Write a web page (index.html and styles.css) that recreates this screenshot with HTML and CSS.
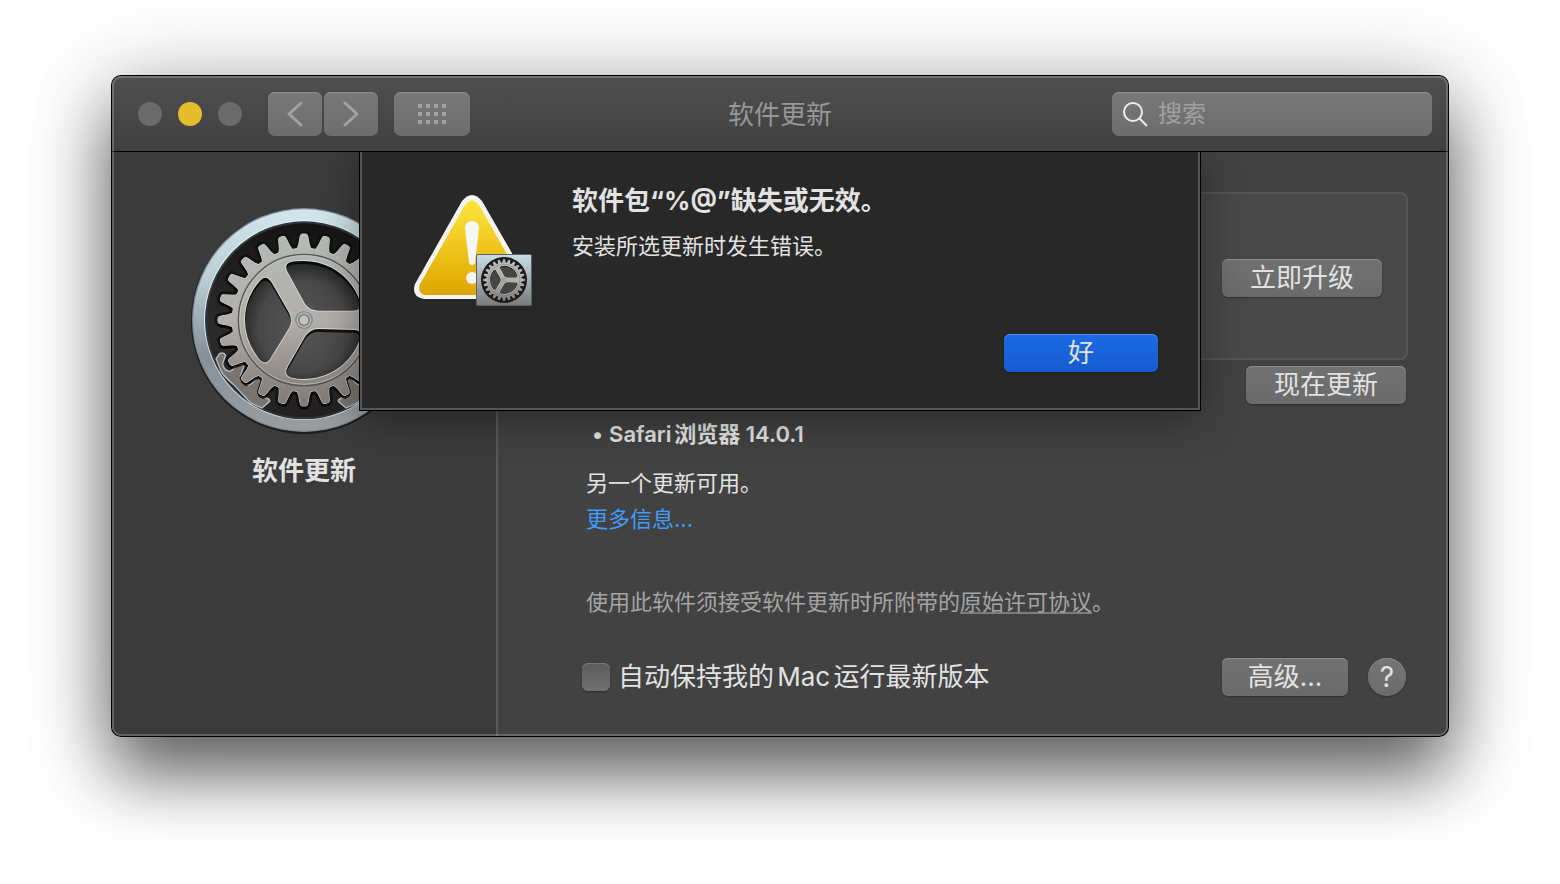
FILE: index.html
```html
<!DOCTYPE html>
<html lang="zh-CN">
<head>
    <meta charset="UTF-8">
    <meta name="viewport" content="width=device-width, initial-scale=1.0">
    <title>软件更新</title>
    <link rel="stylesheet" href="styles.css">
</head>
<body>
    <!-- 齿轮图形，侧栏和警告图标共用 -->
    <svg class="defs" width="0" height="0" aria-hidden="true">
        <defs>
            <linearGradient id="metal" x1="0" y1="0" x2="0" y2="1">
                <stop offset="0" stop-color="#b3bab4"/>
                <stop offset=".5" stop-color="#b3afab"/>
                <stop offset="1" stop-color="#7d7671"/>
            </linearGradient>
            <linearGradient id="ring" x1="0" y1="0" x2="0" y2="1">
                <stop offset="0" stop-color="#d3e6ed"/>
                <stop offset=".3" stop-color="#bccfd7"/>
                <stop offset=".65" stop-color="#86919b"/>
                <stop offset="1" stop-color="#9a9d9f"/>
            </linearGradient>
            <linearGradient id="inside" x1="0" y1="0" x2="0" y2="1">
                <stop offset="0" stop-color="#161413"/>
                <stop offset=".5" stop-color="#2c2b2b"/>
                <stop offset="1" stop-color="#232120"/>
            </linearGradient>
            <radialGradient id="floor" cx=".5" cy=".55" r=".5">
                <stop offset="0" stop-color="#565656"/>
                <stop offset=".75" stop-color="#484848"/>
                <stop offset="1" stop-color="#2c2b2b"/>
            </radialGradient>
            <path id="tooth" d="M-27-205 Q-19-214-16-226 L-11-252 Q-10-258-4-258 H4 Q10-258 11-252 L16-226 Q19-214 27-205Z"/>
            <g id="teeth6">
                <use href="#tooth"/>
                <use href="#tooth" transform="rotate(15)"/>
                <use href="#tooth" transform="rotate(30)"/>
                <use href="#tooth" transform="rotate(45)"/>
                <use href="#tooth" transform="rotate(60)"/>
                <use href="#tooth" transform="rotate(75)"/>
            </g>
            <g id="wheel">
                <circle r="215"/>
                <use href="#teeth6"/>
                <use href="#teeth6" transform="rotate(90)"/>
                <use href="#teeth6" transform="rotate(180)"/>
                <use href="#teeth6" transform="rotate(270)"/>
            </g>
            <path id="hole" d="M44-28 L146-28 Q174-29 169-52 A177 177 0 0 0-22-176 Q-62-175-51-148 L2-50 Q15-28 44-28Z"/>
            <g id="holes">
                <use href="#hole"/>
                <use href="#hole" transform="rotate(120)"/>
                <use href="#hole" transform="rotate(240)"/>
            </g>
            <mask id="edgeMask" maskUnits="userSpaceOnUse" x="-280" y="-280" width="560" height="560">
                <use href="#wheel" fill="#fff" stroke="#fff" stroke-width="3"/>
                <use href="#holes" fill="#000"/>
            </mask>
            <mask id="bodyMask" maskUnits="userSpaceOnUse" x="-280" y="-280" width="560" height="560">
                <use href="#wheel" fill="#fff"/>
                <use href="#holes" fill="#000" stroke="#000" stroke-width="5"/>
            </mask>
            <g id="gear">
                <rect x="-270" y="-270" width="540" height="540" fill="#000" opacity=".75" mask="url(#edgeMask)" transform="translate(0 9)"/>
                <rect x="-270" y="-270" width="540" height="540" fill="#d5dde0" mask="url(#edgeMask)"/>
                <rect x="-270" y="-270" width="540" height="540" fill="url(#metal)" mask="url(#bodyMask)"/>
                <circle r="197" fill="none" stroke="#55555a" stroke-width="4"/>
                <circle r="193" fill="none" stroke="#c3c7c8" stroke-width="2"/>
                <circle r="26" fill="#77797c"/>
                <circle r="23" fill="#b7bcbf"/>
                <circle r="18" fill="#6c6f73"/>
                <circle r="14" fill="#c2c2c1"/>
            </g>
        </defs>
    </svg>

    <div class="window">
        <header class="titlebar">
            <div class="lights">
                <button class="light" aria-label="关闭"></button>
                <button class="light light-min" aria-label="最小化"></button>
                <button class="light" aria-label="缩放"></button>
            </div>
            <div class="nav">
                <button class="tool" aria-label="后退">
                    <svg width="16" height="26" viewBox="0 0 16 26"><path d="M14 2 2 13 14 24"/></svg>
                </button>
                <button class="tool" aria-label="前进">
                    <svg width="16" height="26" viewBox="0 0 16 26"><path d="M2 2 14 13 2 24"/></svg>
                </button>
            </div>
            <button class="tool tool-grid" aria-label="显示全部">
                <svg width="28" height="20" viewBox="0 0 28 20">
                    <path class="dots" d="M0 0h4v4H0zM8 0h4v4H8zM16 0h4v4h-4zM24 0h4v4h-4zM0 8h4v4H0zM8 8h4v4H8zM16 8h4v4h-4zM24 8h4v4h-4zM0 16h4v4H0zM8 16h4v4H8zM16 16h4v4h-4zM24 16h4v4h-4z"/>
                </svg>
            </button>
            <h1>软件更新</h1>
            <label class="search">
                <svg width="26" height="26" viewBox="0 0 26 26"><circle cx="11" cy="11" r="9"/><path d="M17 17 25 25"/></svg>
                <input type="search" placeholder="搜索" aria-label="搜索">
            </label>
        </header>

        <div class="content">
            <aside class="sidebar">
                <svg class="app-icon" viewBox="-342 -342 684 684" aria-hidden="true">
                    <circle cy="3" r="339" fill="#1c1c1c"/>
                    <circle r="336" fill="#7e8d99"/>
                    <circle r="332" fill="url(#ring)"/>
                    <circle r="300" fill="#dcebf3"/>
                    <circle cy="1" r="297" fill="#30363c"/>
                    <circle cy="1" r="291" fill="url(#inside)"/>
                    <use href="#wheel" fill="#141212" stroke="#141212" stroke-width="20"/>
                    <g fill="#7b746e" stroke="#b4bfc8" stroke-width="4">
                        <path id="mesh" d="M-264 116 L-252 100 Q-240 96-235 106 L-244 130 Q-242 150-224 154 Q-212 151-204 136 Q-192 126-180 139 L-191 168 Q-188 188-166 195 Q-152 190-140 169 Q-130 166-125 178 L-137 208 Q-136 230-116 234 Q-102 236-103 244 L-126 264 L-160 249 Q-185 222-211 194 Q-240 170-248 155Z"/>
                        <use href="#mesh" transform="scale(-1 1)"/>
                    </g>
                    <use href="#wheel" fill="#141212" stroke="#141212" stroke-width="10"/>
                    <circle r="182" fill="url(#floor)"/>
                    <use href="#gear"/>
                </svg>
                <h2>软件更新</h2>
            </aside>

            <main class="main">
                <section class="upgrade">
                    <button class="btn">立即升级</button>
                </section>
                <div class="update-now">
                    <button class="btn">现在更新</button>
                </div>
                <div class="info">
                    <ul class="updates">
                        <li>Safari浏览器 14.0.1</li>
                    </ul>
                    <p>另一个更新可用。</p>
                    <p><a href="#" class="more">更多信息...</a></p>
                    <p class="license">使用此软件须接受软件更新时所附带的<a href="#">原始许可协议</a>。</p>
                </div>
                <footer class="bottom">
                    <input type="checkbox" id="auto">
                    <label for="auto">自动保持我的Mac运行最新版本</label>
                    <button class="btn btn-adv">高级...</button>
                    <button class="help" aria-label="帮助">?</button>
                </footer>
            </main>

            <!-- 错误提示 -->
            <div class="sheet" role="alertdialog" aria-labelledby="alertTitle">
                <svg class="alert-icon" width="120" height="116" viewBox="0 0 120 116" aria-hidden="true">
                    <defs>
                        <linearGradient id="yellow" x1="0" y1="0" x2="0" y2="1">
                            <stop offset="0" stop-color="#fde53c"/>
                            <stop offset="1" stop-color="#e0a500"/>
                        </linearGradient>
                        <linearGradient id="plate" x1="0" y1="0" x2="0" y2="1">
                            <stop offset="0" stop-color="#c9dde5"/>
                            <stop offset=".5" stop-color="#a0adb4"/>
                            <stop offset="1" stop-color="#7b7b7b"/>
                        </linearGradient>
                    </defs>
                    <path d="M50 9 Q60-3 70 9 L117 91 Q121 105 108 107 H12 Q-1 105 3 92Z" fill="#f4f4f2"/>
                    <path d="M53 13 Q60 4 67 13 L112 92 Q115 101 107 103 H13 Q5 101 8 92Z" fill="url(#yellow)"/>
                    <path d="M53 36 Q53 29 60 29 Q67 29 67 36 L63 71 Q62 73 60 73 Q58 73 57 71Z" fill="#f6f6f4"/>
                    <circle cx="60" cy="86" r="6" fill="#f6f6f4"/>
                    <rect x="64" y="62" width="56" height="52" rx="2" fill="#5d6266"/>
                    <rect x="65" y="63" width="54" height="50" rx="1" fill="url(#plate)"/>
                    <circle cx="92" cy="88" r="23" fill="#1c1c1c"/>
                    <circle cx="92" cy="88" r="15" fill="#454545"/>
                    <use href="#gear" transform="translate(92 88) scale(.08)"/>
                </svg>
                <div class="alert-text">
                    <h3 id="alertTitle">软件包“%@”缺失或无效。</h3>
                    <p>安装所选更新时发生错误。</p>
                </div>
                <button class="btn btn-ok">好</button>
            </div>
        </div>
    </div>
</body>
</html>
```

FILE: styles.css
```css
* {
    box-sizing: border-box;
}
body {
    margin: 0;
    min-height: 100vh;
    padding: 76px 112px;
    background-color: #fff;
    color: #e2e2e2;
    font-family: Inter, "Noto Sans CJK SC", sans-serif;
    font-size: 22px;
    line-height: 36px;
    text-autospace: normal;
}
h1, h2, h3, p, ul {
    margin: 0;
    padding: 0;
}
button, input {
    font-family: inherit;
    color: inherit;
    margin: 0;
}
button {
    border: none;
    padding: 0;
}
.defs {
    position: absolute;
}

/* 窗口 */
.window {
    position: relative;
    border-radius: 9px;
    background-color: #424242;
    box-shadow: 0 0 0 1px #000, 0 40px 68px rgba(0, 0, 0, 0.55), 0 4px 90px rgba(0, 0, 0, 0.25);
}
.window::after {
    content: "";
    position: absolute;
    inset: 0;
    border: 2px solid rgba(255, 255, 255, 0.2);
    border-radius: 9px;
    pointer-events: none;
}

/* 标题栏 */
.titlebar {
    position: relative;
    display: flex;
    align-items: center;
    height: 76px;
    padding: 0 16px 0 26px;
    border-bottom: 1px solid #000;
    border-radius: 9px 9px 0 0;
    background: linear-gradient(#505050, #3f3f3f);
}
.lights {
    display: flex;
    gap: 16px;
    margin-right: 26px;
}
.light {
    width: 24px;
    height: 24px;
    border-radius: 50%;
    background-color: #6b6b6b;
}
.light-min {
    background-color: #e5bf2b;
}
.nav {
    display: flex;
    gap: 2px;
    margin-right: 16px;
}
.tool {
    display: flex;
    align-items: center;
    justify-content: center;
    width: 54px;
    height: 44px;
    border-radius: 7px;
    background: linear-gradient(#787878, #6d6d6d);
    box-shadow: inset 0 1px 0 #8d8d8d;
}
.tool svg {
    fill: none;
    stroke: #a2a2a2;
    stroke-width: 3;
    stroke-linecap: round;
    stroke-linejoin: round;
}
.tool .dots {
    fill: #a2a2a2;
    stroke: none;
}
.tool-grid {
    width: 76px;
}
.titlebar h1 {
    position: absolute;
    top: 21px;
    left: 50%;
    transform: translateX(-50%);
    font-size: 26px;
    font-weight: 400;
    color: #979797;
}
.search {
    display: flex;
    align-items: center;
    gap: 10px;
    width: 320px;
    height: 44px;
    margin-left: auto;
    padding: 0 10px;
    border-radius: 7px;
    background: linear-gradient(#787878, #6d6d6d);
    box-shadow: inset 0 1px 0 #8d8d8d;
}
.search svg {
    flex: none;
    fill: none;
    stroke: #eee;
    stroke-width: 2;
}
.search input {
    flex: 1;
    min-width: 0;
    border: none;
    outline: none;
    padding: 0;
    background: none;
    font-size: 24px;
}
.search input::placeholder {
    color: #a0a0a0;
}

/* 内容 */
.content {
    position: relative;
    display: flex;
}
.sidebar {
    flex: none;
    width: 386px;
    padding-top: 54px;
    border-right: 2px solid #585858;
    border-radius: 0 0 0 9px;
    background-color: #3b3b3b;
    text-align: center;
}
.app-icon {
    display: block;
    width: 228px;
    height: 228px;
    margin: 0 auto 19px;
}
.sidebar h2 {
    font-size: 26px;
    font-weight: 700;
}
.main {
    flex: 1;
    padding: 40px 40px 40px 84px;
}
.upgrade {
    display: flex;
    align-items: center;
    justify-content: flex-end;
    height: 168px;
    padding: 4px 24px 0;
    border: 2px solid #555;
    border-radius: 8px;
    background-color: #484848;
}
.btn {
    width: 160px;
    height: 38px;
    border-radius: 6px;
    background: linear-gradient(#717171, #6b6b6b);
    box-shadow: inset 0 1px 0 #8b8b8b, 0 1px 2px rgba(0, 0, 0, 0.35);
    font-size: 26px;
    line-height: 36px;
    text-autospace: no-autospace;
}
.update-now {
    display: flex;
    justify-content: flex-end;
    padding: 6px 2px 0 0;
}
.info {
    padding: 12px 4px 0;
}
.updates {
    list-style: none;
    margin-bottom: 13px;
    font-weight: 600;
}
.updates li::before {
    content: "•";
    margin: 0 6px;
}
.more {
    color: #419cff;
    text-decoration: none;
    text-autospace: no-autospace;
}
.license {
    margin-top: 47px;
    color: #a4a4a4;
}
.license a {
    color: inherit;
    text-decoration-thickness: 2px;
    text-underline-offset: 2px;
    text-decoration-color: #7c7c7c;
}
.bottom {
    display: flex;
    align-items: center;
    margin-top: 38px;
    padding-right: 2px;
    font-size: 26px;
}
.bottom input {
    appearance: none;
    width: 28px;
    height: 28px;
    margin-right: 8px;
    border-radius: 6px;
    background: linear-gradient(#5c5c5c, #717171);
    box-shadow: inset 0 1px 0 #777, 0 1px 2px rgba(0, 0, 0, 0.35);
}
.btn-adv {
    width: 126px;
    margin-left: auto;
    margin-right: 20px;
}
.help {
    width: 38px;
    height: 38px;
    border-radius: 50%;
    background: linear-gradient(#757575, #6b6b6b);
    box-shadow: inset 0 1px 0 #8b8b8b, 0 1px 2px rgba(0, 0, 0, 0.35);
    font-size: 28px;
    line-height: 38px;
}

/* 提示框 */
.sheet {
    position: absolute;
    top: 0;
    left: 50%;
    display: grid;
    grid-template-columns: 120px 1fr;
    column-gap: 40px;
    width: 840px;
    margin-left: -420px;
    padding: 28px 40px 36px 50px;
    border: 2px solid #565656;
    border-top: none;
    background-color: #282828;
    box-shadow: 0 0 0 1px #000, 0 8px 40px rgba(0, 0, 0, 0.4);
    clip-path: inset(0 -60px -60px -60px);
}
.alert-icon {
    margin-top: 12px;
}
.alert-text h3 {
    margin: 3px 0 9px;
    font-size: 26px;
    font-weight: 700;
}
.btn-ok {
    grid-column: 2;
    justify-self: end;
    width: 154px;
    margin-top: 26px;
    background: linear-gradient(#1a6be6, #165ccd);
    box-shadow: inset 0 1px 0 #4b8ef0, 0 1px 2px rgba(0, 0, 0, 0.35);
}
```
